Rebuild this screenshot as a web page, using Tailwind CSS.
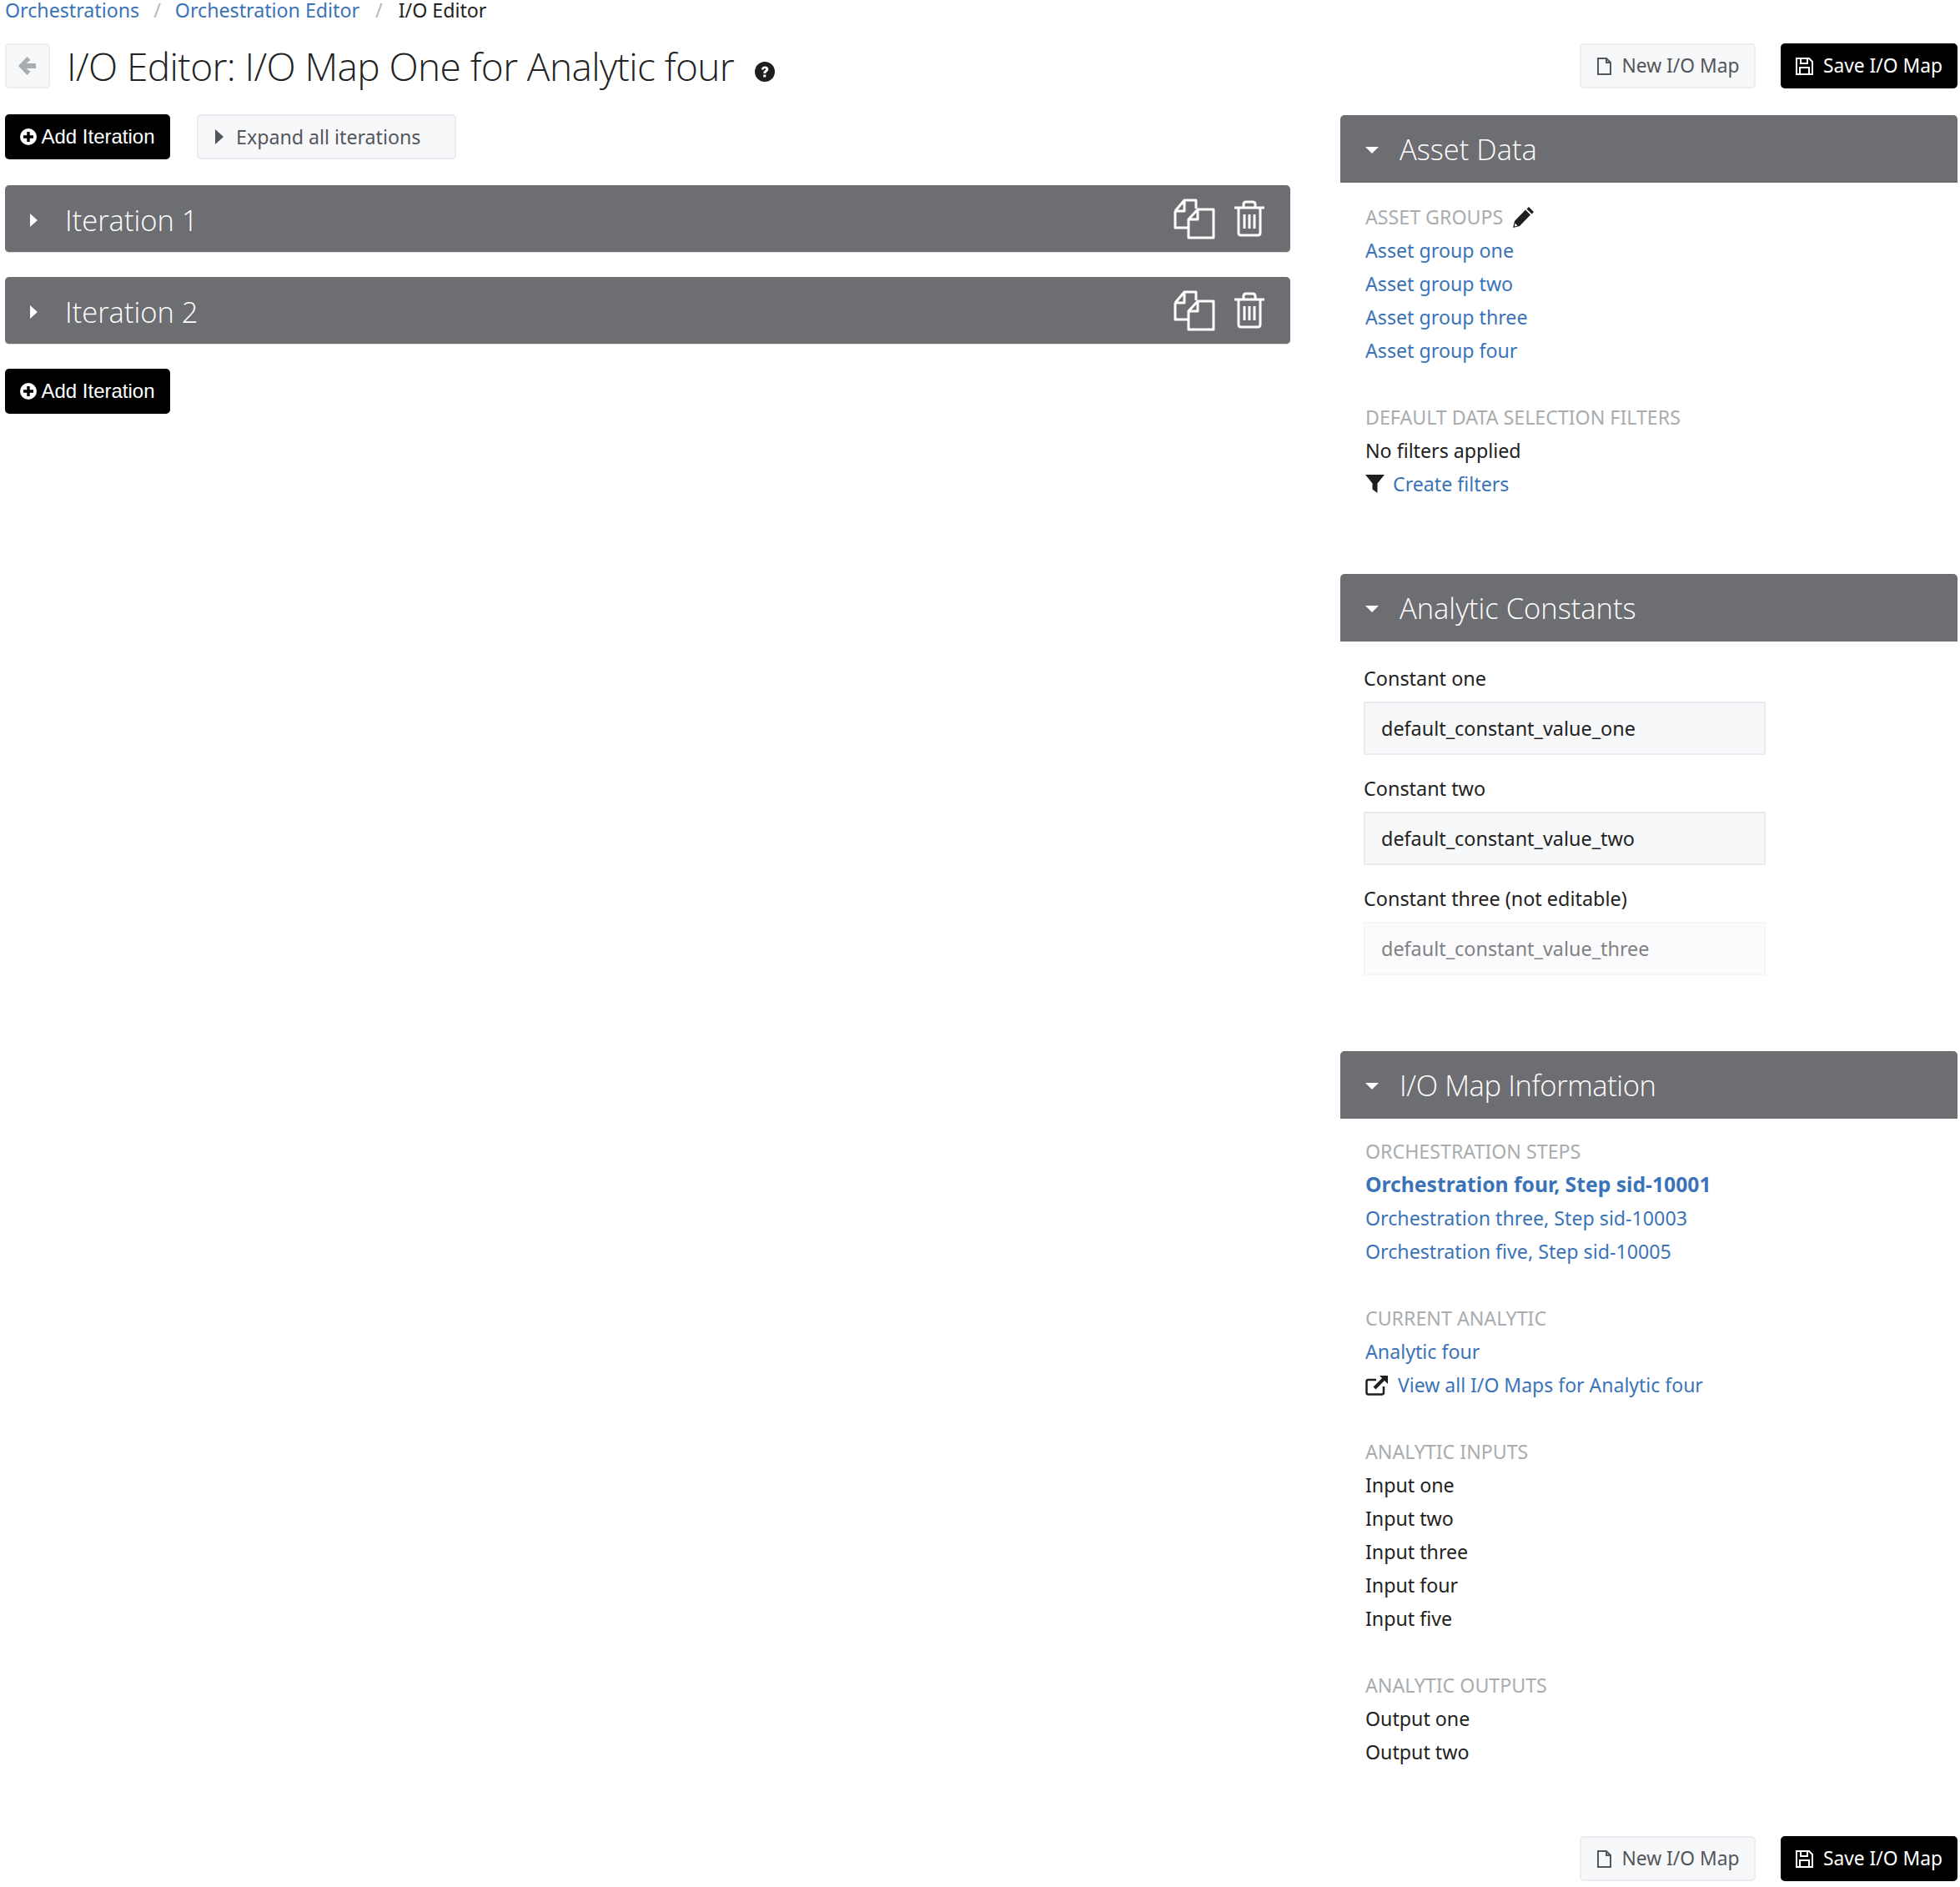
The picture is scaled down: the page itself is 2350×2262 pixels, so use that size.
<!DOCTYPE html>
<html lang="en">
<head>
<meta charset="UTF-8">
<title>I/O Editor</title>
<script src="https://cdn.jsdelivr.net/npm/@tailwindcss/browser@4"></script>
</head>
<body class="bg-white font-['Noto_Sans',sans-serif] text-[23.2px] text-[#222] overflow-hidden">
<div class="w-[2350px] h-[2262px] pl-[6px] pr-[3px] overflow-hidden">

  <!-- breadcrumb -->
  <div class="flex items-center h-[24px] leading-[24px]">
    <a class="text-[#3b73b9]">Orchestrations</a>
    <span class="text-[#b6b8ba] mx-[17px]">/</span>
    <a class="text-[#3b73b9]">Orchestration Editor</a>
    <span class="text-[#b6b8ba] mx-[19px]">/</span>
    <span>I/O Editor</span>
  </div>

  <!-- title row -->
  <div class="flex items-center h-[54px] mt-[28px]">
    <button class="w-[54px] h-[54px] flex items-center justify-center bg-[#f7f8fa] border-2 border-[#ebecf0] rounded-[5px]">
      <svg class="w-[22px] h-[24px]" viewBox="0 0 22 24" fill="#a9adaf"><path d="M10.500 1 L14.500 5 L9.500 9 H21 V15 H9.500 L14.500 19 L10.500 23 L0 12 Z"/></svg>
    </button>
    <h1 class="ml-[20px] text-[46px] leading-[54px] font-light font-['Open_Sans',sans-serif] tracking-[-0.6px]">I/O Editor: I/O Map One for Analytic four</h1>
    <svg class="ml-[25px] mt-[14px] w-[24px] h-[24px]" viewBox="0 0 24 24"><circle cx="12" cy="12" r="12" fill="#1f1f1f"/><path d="M8 9.500c0-2.500 2-4 4.300-4s4 1.500 4 3.500c0 3-3 3-3 5h-3c0-3.500 2.800-3.500 2.800-5 0-.7-.6-1-1.100-1-.7 0-1.200.5-1.500 1.500zM10.300 15.500h3v3h-3z" fill="#fff"/></svg>
    <div class="ml-auto flex gap-[30px]">
      <button class="h-[54px] w-[211px] flex items-center justify-center gap-[12px] bg-[#f7f8fa] border-2 border-[#ebecf0] rounded-[5px] text-[22.8px] text-[#53565a]">
        <svg class="w-[19px] h-[21px]" viewBox="0 0 19 21" fill="none" stroke="#53565a" stroke-width="2"><path d="M2 1h10l5 5v14H2zM12 1v5h5"/></svg>
        New I/O Map
      </button>
      <button class="h-[54px] w-[212px] flex items-center justify-center gap-[12px] bg-black rounded-[5px] text-[22.8px] text-white">
        <svg class="w-[21px] h-[21px]" viewBox="0 0 21 21" fill="none" stroke="#fff" stroke-width="2"><path d="M1 1h15l4 4v15H1zM6 1v6h8V1M5 20v-8h11v8"/></svg>
        Save I/O Map
      </button>
    </div>
  </div>

  <div class="flex justify-between mt-[31px]">
    <!-- left column -->
    <div class="w-[1541px] flex flex-col items-start">
      <div class="flex gap-[32px]">
        <button class="h-[54px] w-[198px] flex items-center justify-center gap-[5px] bg-black rounded-[5px] text-white text-[24px] font-['Liberation_Sans',sans-serif]">
          <svg class="w-[20px] h-[20px]" viewBox="0 0 20 20"><circle cx="10" cy="10" r="10" fill="#fff"/><path d="M8.300 4h3.400v4.300H16v3.400h-4.300V16H8.300v-4.300H4V8.300h4.300z" fill="#000"/></svg>
          Add Iteration
        </button>
        <button class="h-[54px] w-[311px] flex items-center gap-[15px] pl-[20px] bg-[#f7f8fa] border-2 border-[#ebecf0] rounded-[5px] text-[#53565a]">
          <svg class="w-[10px] h-[18px]" viewBox="0 0 10 18" fill="#53565a"><path d="M0 0l10 9-10 9z"/></svg>
          Expand all iterations
        </button>
      </div>

      <div class="w-full h-[81px] mt-[31px] flex items-center bg-[#6d6e71] rounded-[5px] text-white border-b border-[#ddd]">
        <svg class="ml-[30px] w-[9px] h-[16px] mt-[4px]" viewBox="0 0 10 18" fill="#fff"><path d="M0 0l10 9-10 9z"/></svg>
        <span class="ml-[33px] mt-[3px] text-[34.500px] font-light font-['Open_Sans',sans-serif]">Iteration 1</span>
        <svg class="ml-auto w-[50px] h-[50px]" viewBox="0 0 50 50" fill="none" stroke="#fff" stroke-width="3" stroke-linejoin="round"><path d="M2 16l11-13h14v10M2 16v20h16M2 16h11V3"/><path d="M18 26l11-12h19v34H18zM18 26h11V14"/></svg>
        <svg class="ml-[22px] mr-[30px] w-[38px] h-[44px]" viewBox="0 0 38 44" fill="none" stroke="#fff" stroke-width="3" stroke-linejoin="round"><path d="M1 9h36M6 9v30q0 3 3 3h20q3 0 3-3V9M12 9V5q0-3 3-3h8q3 0 3 3v4M13 17v17M19 17v17M25 17v17"/></svg>
      </div>
      <div class="w-full h-[81px] mt-[29px] flex items-center bg-[#6d6e71] rounded-[5px] text-white border-b border-[#ddd]">
        <svg class="ml-[30px] w-[9px] h-[16px] mt-[4px]" viewBox="0 0 10 18" fill="#fff"><path d="M0 0l10 9-10 9z"/></svg>
        <span class="ml-[33px] mt-[3px] text-[34.500px] font-light font-['Open_Sans',sans-serif]">Iteration 2</span>
        <svg class="ml-auto w-[50px] h-[50px]" viewBox="0 0 50 50" fill="none" stroke="#fff" stroke-width="3" stroke-linejoin="round"><path d="M2 16l11-13h14v10M2 16v20h16M2 16h11V3"/><path d="M18 26l11-12h19v34H18zM18 26h11V14"/></svg>
        <svg class="ml-[22px] mr-[30px] w-[38px] h-[44px]" viewBox="0 0 38 44" fill="none" stroke="#fff" stroke-width="3" stroke-linejoin="round"><path d="M1 9h36M6 9v30q0 3 3 3h20q3 0 3-3V9M12 9V5q0-3 3-3h8q3 0 3 3v4M13 17v17M19 17v17M25 17v17"/></svg>
      </div>

      <button class="h-[54px] w-[198px] mt-[29px] flex items-center justify-center gap-[5px] bg-black rounded-[5px] text-white text-[24px] font-['Liberation_Sans',sans-serif]">
        <svg class="w-[20px] h-[20px]" viewBox="0 0 20 20"><circle cx="10" cy="10" r="10" fill="#fff"/><path d="M8.300 4h3.400v4.300H16v3.400h-4.300V16H8.300v-4.300H4V8.300h4.300z" fill="#000"/></svg>
        Add Iteration
      </button>
    </div>

    <!-- right column -->
    <div class="w-[740px] mt-px leading-[40px]">
      <section class="h-[550px]">
        <div class="h-[81px] flex items-center bg-[#6d6e71] rounded-t-[5px] text-white">
          <svg class="ml-[30px] w-[16px] h-[10px] mt-[2px]" viewBox="0 0 16 10" fill="#fff"><path d="M0 1h16L8 9z"/></svg>
          <span class="ml-[25px] text-[34.500px] font-light font-['Open_Sans',sans-serif]">Asset Data</span>
        </div>
        <div class="pl-[30px] pt-[21px]">
          <div class="flex items-center text-[#a9adaf]">ASSET GROUPS
            <svg class="ml-[12px] w-[25px] h-[25px]" viewBox="0 0 25 25" fill="#1f1f1f"><path d="M19 0l6 6-2.500 2.500-6-6zM15 3.500l6 6L8 23 0 25l2-8z"/><path d="M2.500 19.500l3 3-3.500 1z" fill="#fff"/></svg>
          </div>
          <a class="block text-[#3b73b9]">Asset group one</a>
          <a class="block text-[#3b73b9]">Asset group two</a>
          <a class="block text-[#3b73b9]">Asset group three</a>
          <a class="block text-[#3b73b9]">Asset group four</a>
          <div class="mt-[40px] text-[#a9adaf]">DEFAULT DATA SELECTION FILTERS</div>
          <div>No filters applied</div>
          <div class="flex items-center">
            <svg class="w-[23px] h-[22px]" viewBox="0 0 23 22" fill="#1f1f1f"><path d="M0 0h23L14.500 10.500V22l-6-4.500V10.500z"/></svg>
            <a class="ml-[10px] text-[#3b73b9]">Create filters</a>
          </div>
        </div>
      </section>

      <section class="h-[572px]">
        <div class="h-[81px] flex items-center bg-[#6d6e71] rounded-t-[5px] text-white">
          <svg class="ml-[30px] w-[16px] h-[10px] mt-[2px]" viewBox="0 0 16 10" fill="#fff"><path d="M0 1h16L8 9z"/></svg>
          <span class="ml-[25px] text-[34.500px] font-light font-['Open_Sans',sans-serif]">Analytic Constants</span>
        </div>
        <div class="pl-[28px] pt-[24px] text-[23.4px]">
          <label class="block">Constant one</label>
          <div class="w-[482px] h-[64px] mt-[8px] pl-[19px] flex items-center bg-[#f7f8fa] border-2 border-[#ebecf0]">default_constant_value_one</div>
          <label class="block mt-[20px]">Constant two</label>
          <div class="w-[482px] h-[64px] mt-[8px] pl-[19px] flex items-center bg-[#f7f8fa] border-2 border-[#ebecf0]">default_constant_value_two</div>
          <label class="block mt-[20px]">Constant three (not editable)</label>
          <div class="w-[482px] h-[64px] mt-[8px] pl-[19px] flex items-center bg-[#fbfbfd] border-2 border-[#f5f5f8] text-[#808285]">default_constant_value_three</div>
        </div>
      </section>

      <section>
        <div class="h-[81px] flex items-center bg-[#6d6e71] rounded-t-[5px] text-white">
          <svg class="ml-[30px] w-[16px] h-[10px] mt-[2px]" viewBox="0 0 16 10" fill="#fff"><path d="M0 1h16L8 9z"/></svg>
          <span class="ml-[25px] text-[34.500px] font-light tracking-[-0.4px] font-['Open_Sans',sans-serif]">I/O Map Information</span>
        </div>
        <div class="pl-[30px] pt-[19px]">
          <div class="text-[#a9adaf]">ORCHESTRATION STEPS</div>
          <a class="block font-bold text-[24.700px] text-[#3b73b9]">Orchestration four, Step sid-10001</a>
          <a class="block text-[#3b73b9]">Orchestration three, Step sid-10003</a>
          <a class="block text-[#3b73b9]">Orchestration five, Step sid-10005</a>
          <div class="mt-[40px] text-[#a9adaf]">CURRENT ANALYTIC</div>
          <a class="block text-[#3b73b9]">Analytic four</a>
          <div class="flex items-center">
            <svg class="w-[28px] h-[25px]" viewBox="0 0 28 25" fill="none" stroke="#1f1f1f" stroke-width="2.500"><path d="M22 14v7q0 2.500-2.500 2.500h-16Q1.500 23.500 1.500 21V8q0-2 2-2H13"/><path d="M11 16L23 4" stroke-width="4"/><path d="M17 1h10v10z" fill="#1f1f1f" stroke="none"/></svg>
            <a class="ml-[11px] text-[23px] text-[#3b73b9]">View all I/O Maps for Analytic four</a>
          </div>
          <div class="mt-[40px] text-[#a9adaf]">ANALYTIC INPUTS</div>
          <div>Input one</div>
          <div>Input two</div>
          <div>Input three</div>
          <div>Input four</div>
          <div>Input five</div>
          <div class="mt-[40px] text-[#a9adaf]">ANALYTIC OUTPUTS</div>
          <div>Output one</div>
          <div>Output two</div>
        </div>
        <div class="flex justify-end gap-[30px] mt-[81px]">
          <button class="h-[54px] w-[211px] flex items-center justify-center gap-[12px] bg-[#f7f8fa] border-2 border-[#ebecf0] rounded-[5px] text-[22.8px] text-[#53565a]">
            <svg class="w-[19px] h-[21px]" viewBox="0 0 19 21" fill="none" stroke="#53565a" stroke-width="2"><path d="M2 1h10l5 5v14H2zM12 1v5h5"/></svg>
            New I/O Map
          </button>
          <button class="h-[54px] w-[212px] flex items-center justify-center gap-[12px] bg-black rounded-[5px] text-[22.8px] text-white">
            <svg class="w-[21px] h-[21px]" viewBox="0 0 21 21" fill="none" stroke="#fff" stroke-width="2"><path d="M1 1h15l4 4v15H1zM6 1v6h8V1M5 20v-8h11v8"/></svg>
            Save I/O Map
          </button>
        </div>
      </section>
    </div>
  </div>
</div>
</body>
</html>
